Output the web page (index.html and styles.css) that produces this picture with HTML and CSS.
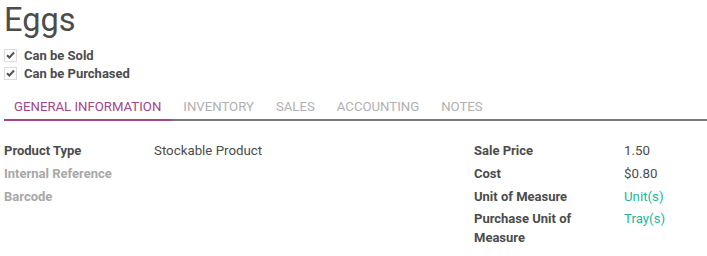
FILE: index.html
```html
<!DOCTYPE html>
<html lang="en">
<head>
<meta charset="UTF-8">
<title>Eggs</title>
<link rel="stylesheet" href="styles.css">
</head>
<body>

<div class="sheet">
    <h1 class="title">Eggs</h1>

    <div class="options">
        <label class="option">
            <span class="box"><svg width="9" height="8" viewBox="0 0 9 8"><path d="M1 4.2 L3.4 6.5 L8 1.5" fill="none" stroke="#555" stroke-width="2"/></svg></span>
            Can be Sold
        </label>
        <label class="option">
            <span class="box"><svg width="9" height="8" viewBox="0 0 9 8"><path d="M1 4.2 L3.4 6.5 L8 1.5" fill="none" stroke="#555" stroke-width="2"/></svg></span>
            Can be Purchased
        </label>
    </div>

    <!-- tabs -->
    <ul class="tabs">
        <li class="tab active">GENERAL INFORMATION</li>
        <li class="tab">INVENTORY</li>
        <li class="tab">SALES</li>
        <li class="tab">ACCOUNTING</li>
        <li class="tab">NOTES</li>
    </ul>

    <div class="groups">
        <table class="group">
            <tr><td class="lbl">Product Type</td><td class="val">Stockable Product</td></tr>
            <tr><td class="lbl muted">Internal Reference</td><td class="val"></td></tr>
            <tr><td class="lbl muted">Barcode</td><td class="val"></td></tr>
        </table>
        <table class="group">
            <tr><td class="lbl">Sale Price</td><td class="val">1.50</td></tr>
            <tr><td class="lbl">Cost</td><td class="val">$0.80</td></tr>
            <tr><td class="lbl">Unit of Measure</td><td class="val link">Unit(s)</td></tr>
            <tr><td class="lbl">Purchase Unit of Measure</td><td class="val link">Tray(s)</td></tr>
        </table>
    </div>
</div>

</body>
</html>
```

FILE: styles.css
```css
body {
    margin: 0;
    font-family: Roboto, "Liberation Sans", sans-serif;
    font-size: 13px;
    color: #4c4c4c;
    background: #fff;
}
.sheet {
    padding: 0 0 0 4px;
}
.title {
    margin: 0;
    padding-top: 1px;
    font-size: 32.5px;
    font-weight: 400;
    line-height: 38px;
    color: #4c4c4c;
}
.options {
    margin-top: 7px;
}
.option {
    display: flex;
    align-items: center;
    height: 18px;
    font-weight: 700;
}
.box {
    display: inline-flex;
    align-items: center;
    justify-content: center;
    box-sizing: border-box;
    width: 13px;
    height: 13px;
    margin-right: 7px;
    border: 1px solid #dcdcdc;
}
.tabs {
    display: flex;
    list-style: none;
    margin: 13px 0 0 0;
    padding: 0;
    border-bottom: 2px solid #7b7b7b;
}
.tab {
    padding: 4px 11px 4px 11px;
    margin-bottom: -2px;
    font-size: 13.2px;
    color: #b0b0b0;
    border-bottom: 2px solid transparent;
    line-height: 16px;
}
.tab.active {
    padding-left: 10px;
    color: #a24689;
    border-bottom-color: #a24689;
}
.groups {
    display: flex;
    margin-top: 19px;
}
.group {
    width: 470px;
    border-collapse: collapse;
    align-self: flex-start;
}
.group + .group {
    width: auto;
}
.lbl {
    width: 140px;
    padding: 2.2px 10px 2.2px 0;
    font-weight: 700;
    line-height: 18.3px;
    vertical-align: top;
}
.lbl.muted {
    color: #a8a8a8;
}
.val {
    padding: 2.2px 0;
    font-size: 13.3px;
    line-height: 18.3px;
    vertical-align: top;
}
.link {
    color: #21b799;
}
```
